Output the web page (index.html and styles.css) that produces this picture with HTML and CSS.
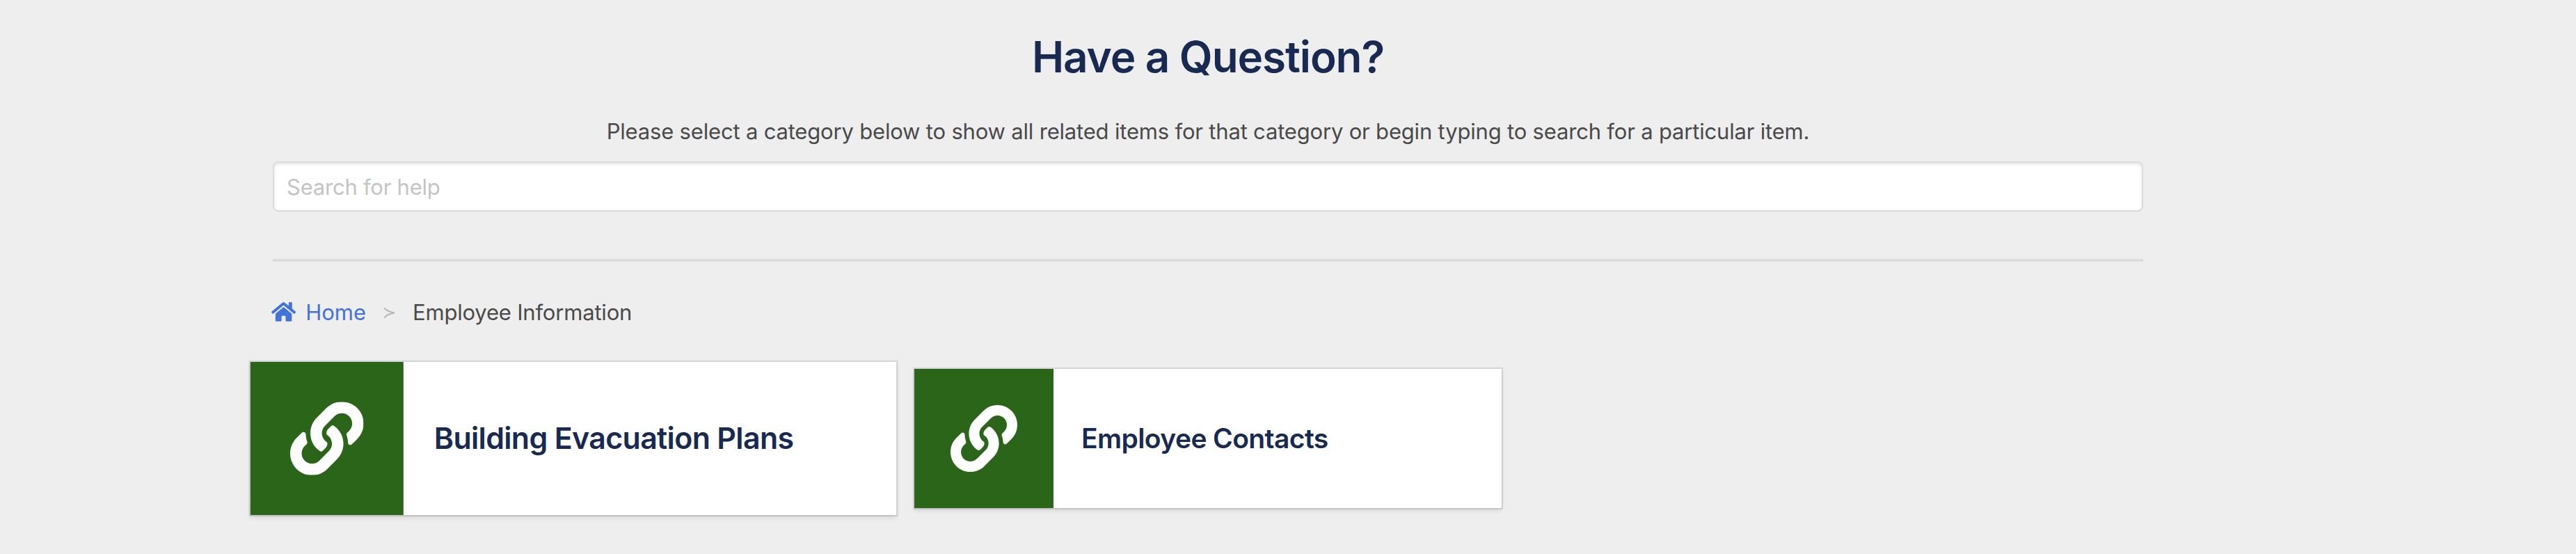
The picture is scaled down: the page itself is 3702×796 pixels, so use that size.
FILE: index.html
```html
<!DOCTYPE html>
<html lang="en">
<head>
<meta charset="utf-8">
<title>Have a Question?</title>
<link rel="stylesheet" href="styles.css">
</head>
<body>
<svg class="sprite" aria-hidden="true">
  <symbol id="link" viewBox="0 0 512 512"><path d="M326.612 185.391c59.747 59.809 58.927 155.698.36 214.59-.11.12-.24.25-.36.37l-67.2 67.2c-59.27 59.27-155.699 59.262-214.96 0-59.27-59.26-59.27-155.7 0-214.96l37.106-37.106c9.84-9.84 26.786-3.3 27.294 10.606.648 17.722 3.826 35.527 9.69 52.721 1.986 5.822.567 12.262-3.783 16.612l-13.087 13.087c-28.026 28.026-28.905 73.66-1.155 101.96 28.024 28.579 74.086 28.749 102.325.51l67.2-67.19c28.191-28.191 28.073-73.757 0-101.83-3.701-3.694-7.429-6.564-10.341-8.569a16.037 16.037 0 0 1-6.947-12.606c-.396-10.567 3.348-21.456 11.698-29.806l21.054-21.055c5.521-5.521 14.182-6.199 20.584-1.731a152.482 152.482 0 0 1 20.522 17.197zM467.547 44.449c-59.261-59.262-155.69-59.27-214.96 0l-67.2 67.2c-.12.12-.25.25-.36.37-58.566 58.892-59.387 154.781.36 214.59a152.454 152.454 0 0 0 20.521 17.196c6.402 4.468 15.064 3.789 20.584-1.731l21.054-21.055c8.35-8.35 12.094-19.239 11.698-29.806a16.037 16.037 0 0 0-6.947-12.606c-2.912-2.005-6.64-4.875-10.341-8.569-28.073-28.073-28.191-73.639 0-101.83l67.2-67.19c28.239-28.239 74.3-28.069 102.325.51 27.75 28.3 26.872 73.934-1.155 101.96l-13.087 13.087c-4.35 4.35-5.769 10.79-3.783 16.612 5.864 17.194 9.042 34.999 9.69 52.721.509 13.906 17.454 20.446 27.294 10.606l37.106-37.106c59.271-59.259 59.271-155.699.001-214.959z"/></symbol>
</svg>
<main class="page">
  <h1 class="title">Have a Question?</h1>
  <p class="lead">Please select a category below to show all related items for that category or begin typing to search for a particular item.</p>
  <input class="search" type="text" placeholder="Search for help">
  <hr class="rule">
  <nav class="breadcrumb">
    <a class="home" href="#">
      <svg class="home-icon" viewBox="0 0 576 512"><path d="M280.37 148.26L96 300.11V464a16 16 0 0 0 16 16l112.06-.29a16 16 0 0 0 15.92-16V368a16 16 0 0 1 16-16h64a16 16 0 0 1 16 16v95.64a16 16 0 0 0 16 16.05L464 480a16 16 0 0 0 16-16V300L295.67 148.26a12.19 12.19 0 0 0-15.3 0zM571.6 251.47L488 182.56V44.05a12 12 0 0 0-12-12h-56a12 12 0 0 0-12 12v72.61L318.47 43a48 48 0 0 0-61 0L4.34 251.47a12 12 0 0 0-1.6 16.9l25.5 31A12 12 0 0 0 45.15 301l235.22-193.74a12.19 12.19 0 0 1 15.3 0L530.9 301a12 12 0 0 0 16.9-1.6l25.5-31a12 12 0 0 0-1.7-16.93z"/></svg>
      <span class="crumb-text">Home</span>
    </a>
    <span class="separator">≻</span>
    <span class="crumb-text current">Employee Information</span>
  </nav>
  <section class="cards">
    <a class="card card-active" href="#">
      <span class="card-icon"><svg class="link-icon"><use href="#link"/></svg></span>
      <span class="card-title">Building Evacuation Plans</span>
    </a>
    <a class="card" href="#">
      <span class="card-icon"><svg class="link-icon"><use href="#link"/></svg></span>
      <span class="card-title">Employee Contacts</span>
    </a>
  </section>
</main>
</body>
</html>
```
FILE: styles.css
```css
* { box-sizing: border-box; }
body {
  margin: 0;
  height: 796px;
  overflow: hidden;
  background: #eee;
  color: #4a4a4a;
  font: 31px/48px Inter, "Liberation Sans", sans-serif;
}
a { text-decoration: none; }
.sprite { display: none; }
.page {
  display: flex;
  flex-direction: column;
  width: 2688px;
  margin-left: 392px;
  padding-top: 46px;
}
.title {
  margin: 0;
  color: #182952;
  font-size: 62px;
  font-weight: 600;
  letter-spacing: -1.1px;
  line-height: 72px;
  text-align: center;
  white-space: nowrap;
}
.lead {
  margin: 47px 0 0;
  letter-spacing: -.185px;
  text-align: center;
  white-space: nowrap;
}
.search {
  height: 72px;
  margin: 19px 0 0;
  padding: 1px 18px 0;
  border: 2px solid #dbdbdb;
  border-radius: 8px;
  background: #fff;
  box-shadow: inset 0 2px 4px rgba(10, 10, 10, .1);
  font: inherit;
  letter-spacing: -.23px;
}
.search::placeholder { color: #c4c4c4; opacity: 1; }
.rule {
  width: 100%;
  height: 4px;
  margin: 68px 0 0;
  border: 0;
  background: #dbdbdb;
}
.breadcrumb {
  display: flex;
  align-items: center;
  height: 48px;
  margin: 48px 0 0 -2px;
  white-space: nowrap;
}
.home {
  display: flex;
  align-items: center;
  gap: 14px;
  width: 136px;
  color: #4173db;
}
.home-icon { width: 36px; height: 32px; fill: currentColor; }
.crumb-text { padding-top: 2px; }
.current { letter-spacing: -.19px; }
.separator {
  width: 67px;
  padding-top: 2px;
  color: #b5b5b5;
  font: 24px/48px "DejaVu Sans", sans-serif;
  text-align: center;
}
.cards {
  display: flex;
  gap: 68px;
  margin: 58px 0 0 10px;
}
.card {
  display: flex;
  width: 844px;
  height: 200px;
  background: #fff;
  box-shadow: 0 4px 6px rgba(10, 10, 10, .1), 0 0 0 2px rgba(10, 10, 10, .1);
  color: #182952;
}
.card-active { transform: scale(1.1); }
.card-icon {
  display: flex;
  align-items: center;
  justify-content: center;
  width: 200px;
  background: #2b6519;
}
.link-icon { width: 96px; height: 96px; fill: #fff; }
.card-title {
  align-self: center;
  padding-left: 40px;
  font-size: 39px;
  font-weight: 600;
  letter-spacing: -.6px;
  white-space: nowrap;
}
```
